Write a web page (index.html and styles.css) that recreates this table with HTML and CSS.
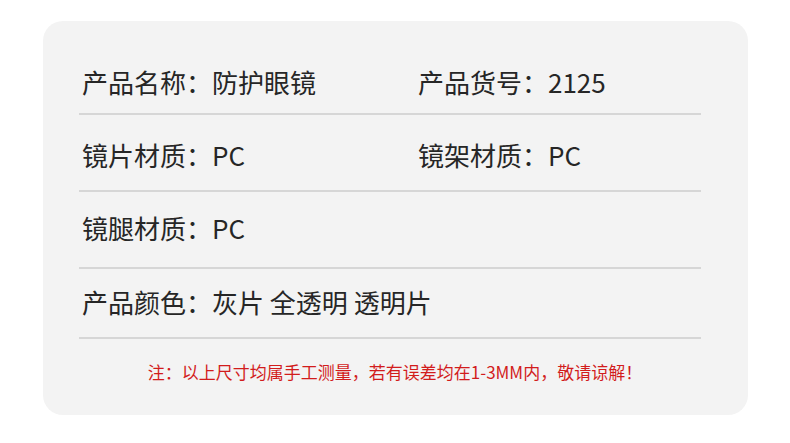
FILE: index.html
```html
<!DOCTYPE html>
<html lang="zh-CN">
<head>
<meta charset="utf-8">
<link rel="stylesheet" href="styles.css">
</head>
<body>
<div class="card">
  <div class="row row-1">
    <div class="cell">产品名称：防护眼镜</div>
    <div class="cell">产品货号：2125</div>
  </div>
  <div class="row row-2">
    <div class="cell">镜片材质：PC</div>
    <div class="cell">镜架材质：PC</div>
  </div>
  <div class="row row-3">
    <div class="cell">镜腿材质：PC</div>
  </div>
  <div class="row row-4">
    <div class="cell wide">产品颜色：灰片 全透明 透明片</div>
  </div>
  <p class="note">注：以上尺寸均属手工测量，若有误差均在1-3MM内，敬请谅解！</p>
</div>
</body>
</html>
```

FILE: styles.css
```css
html, body {
  margin: 0;
  padding: 0;
  background: #ffffff;
}
body {
  width: 790px;
  height: 443px;
  font-family: "Noto Sans CJK SC", "Noto Sans", sans-serif;
  color: #262626;
  padding: 21px 0 0 43px;
  box-sizing: border-box;
}
.card {
  width: 705px;
  height: 394px;
  box-sizing: border-box;
  background: #f3f3f3;
  border-radius: 20px;
  padding: 17px 47px 0 36px;
}
.row {
  display: grid;
  grid-template-columns: 336px 1fr;
  border-bottom: 2px solid #d6d6d6;
  padding: 23px 0 16px 3px;
  font-size: 26px;
  line-height: 34px;
}
.row-1 {
  padding-top: 27px;
  padding-bottom: 14px;
}
.row-2 {
  padding-top: 23px;
  padding-bottom: 18px;
}
.row-3 {
  padding-top: 19px;
  padding-bottom: 22px;
}
.row-4 {
  padding-top: 16px;
  padding-bottom: 18px;
}
.cell.wide {
  grid-column: 1 / 3;
}
.note {
  margin: 0;
  padding-top: 21px;
  text-align: center;
  font-size: 17px;
  line-height: 24px;
  color: #d21c1c;
  padding-left: 10px;
}
```
